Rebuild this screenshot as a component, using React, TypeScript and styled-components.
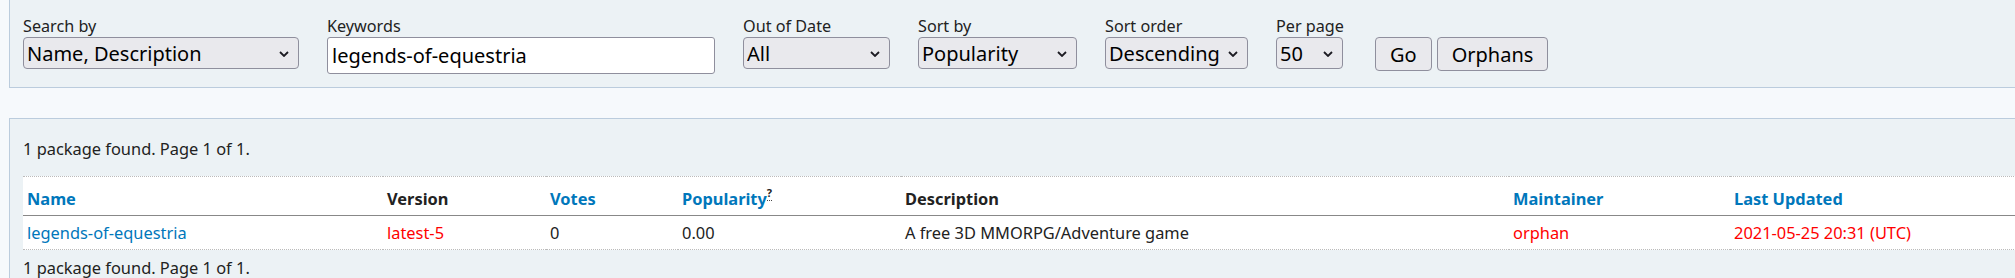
import React from 'react'
import styled, { createGlobalStyle } from 'styled-components'

const GlobalStyle = createGlobalStyle`
  html, body {
    margin: 0;
    padding: 0;
    overflow: hidden;
    background: #f6f9fc;
  }
  body {
    font-family: 'Noto Sans', 'Liberation Sans', sans-serif;
    font-size: 16.4px;
    line-height: 22px;
    color: #222;
  }
`

const Page = styled.div`
  width: 2080px;
  padding-left: 9px;
  margin-top: -10px;
  box-sizing: border-box;
`

const Box = styled.div<{ $pad: string }>`
  background: #ecf2f5;
  border: 1px solid #bcd;
  padding: ${(p) => p.$pad};
  margin-bottom: 30px;
`

const FilterRow = styled.form`
  display: flex;
  align-items: flex-start;
  gap: 28px;
`

const Field = styled.div`
  display: flex;
  flex-direction: column;
`

const Label = styled.label`
  font-size: 16.2px;
  line-height: 22px;
  color: #222;
`

const SelectWrap = styled.div<{ $w: number }>`
  position: relative;
  width: ${(p) => p.$w}px;
  height: 32px;
`

const Select = styled.select`
  appearance: none;
  width: 100%;
  height: 32px;
  box-sizing: border-box;
  margin: 0;
  padding: 0 18px 0 3px;
  font-family: 'Noto Sans', 'Liberation Sans', sans-serif;
  font-size: 20px;
  color: #000;
  background: #e9e9ed;
  border: 1px solid #8f8f9d;
  border-radius: 4px;
`

const Chevron = styled.svg`
  position: absolute;
  right: 10px;
  top: 14px;
  pointer-events: none;
`

const TextInput = styled.input`
  width: 388px;
  height: 37px;
  box-sizing: border-box;
  margin: 0;
  padding: 0 4px;
  font-family: 'Noto Sans', 'Liberation Sans', sans-serif;
  font-size: 20px;
  color: #000;
  background: #fff;
  border: 1px solid #8f8f9d;
  border-radius: 3px;
`

const Buttons = styled.div`
  display: flex;
  gap: 5px;
  padding-top: 22px;
  margin-left: 3px;
`

const Button = styled.button`
  height: 34px;
  box-sizing: border-box;
  margin: 0;
  padding: 0 14px;
  font-family: 'Noto Sans', 'Liberation Sans', sans-serif;
  font-size: 20px;
  color: #000;
  background: #e9e9ed;
  border: 1px solid #8f8f9d;
  border-radius: 4px;
`

const Stats = styled.p<{ $m: string }>`
  margin: ${(p) => p.$m};
  line-height: 22px;
`

const Table = styled.table`
  width: 100%;
  table-layout: fixed;
  border-collapse: collapse;
  background: #fff;
  border-top: 1px dotted #bbb;
`

const Th = styled.th`
  text-align: left;
  font-weight: bold;
  padding: 11px 4px 5px;
  color: #222;
  border-bottom: 1px solid #888;
  white-space: nowrap;
`

const Td = styled.td<{ $red?: boolean }>`
  padding: 6px 4px 5px;
  color: ${(p) => (p.$red ? '#f00' : '#222')};
  border-bottom: 1px dotted #bbb;
  white-space: nowrap;
`

const Link = styled.a`
  color: #07b;
  text-decoration: none;
`

const Sup = styled.sup`
  font-size: 11px;
  line-height: 0;
  vertical-align: 8px;
`

const Abbr = styled.abbr`
  text-decoration: none;
  border-bottom: 1px dotted #444;
  cursor: help;
`

const Caret = () => (
  <Chevron width='10' height='6' viewBox='0 0 10 6'>
    <polyline points='1,1 5,5 9,1' fill='none' stroke='#1c1b22' strokeWidth='1.8' />
  </Chevron>
)

const SelectField = (props: { label: string; width: number; options: string[] }) => (
  <Field>
    <Label>{props.label}</Label>
    <SelectWrap $w={props.width}>
      <Select defaultValue={props.options[0]}>
        {props.options.map((o) => (
          <option key={o}>{o}</option>
        ))}
      </Select>
      <Caret />
    </SelectWrap>
  </Field>
)

const columns = [360, 163, 132, 223, 608, 221]

const App = () => {
  return (
    <>
      <GlobalStyle />
      <Page>
        <Box $pad='24px 13px 13px'>
          <FilterRow onSubmit={(e) => e.preventDefault()}>
            <SelectField
              label='Search by'
              width={276}
              options={['Name, Description', 'Name Only', 'Package Base', 'Keywords', 'Maintainer']}
            />
            <Field>
              <Label>Keywords</Label>
              <TextInput defaultValue='legends-of-equestria' />
            </Field>
            <SelectField label='Out of Date' width={147} options={['All', 'Flagged', 'Not Flagged']} />
            <SelectField label='Sort by' width={159} options={['Popularity', 'Name', 'Votes']} />
            <SelectField label='Sort order' width={143} options={['Descending', 'Ascending']} />
            <SelectField label='Per page' width={67} options={['50', '100', '250']} />
            <Buttons>
              <Button type='submit'>Go</Button>
              <Button type='button'>Orphans</Button>
            </Buttons>
          </FilterRow>
        </Box>

        <Box $pad='13px'>
          <Stats $m='6px 0 16px'>1 package found. Page 1 of 1.</Stats>
          <Table>
            <colgroup>
              {columns.map((w, i) => (
                <col key={i} style={{ width: w }} />
              ))}
              <col />
            </colgroup>
            <thead>
              <tr>
                <Th>
                  <Link href='#'>Name</Link>
                </Th>
                <Th>Version</Th>
                <Th>
                  <Link href='#'>Votes</Link>
                </Th>
                <Th>
                  <Link href='#'>Popularity</Link>
                  <Sup>
                    <Abbr title='Popularity is calculated as the sum of all votes with each vote being weighted with a factor of 0.98 per day since its creation.'>
                      ?
                    </Abbr>
                  </Sup>
                </Th>
                <Th>Description</Th>
                <Th>
                  <Link href='#'>Maintainer</Link>
                </Th>
                <Th>
                  <Link href='#'>Last Updated</Link>
                </Th>
              </tr>
            </thead>
            <tbody>
              <tr>
                <Td>
                  <Link href='#'>legends-of-equestria</Link>
                </Td>
                <Td $red>latest-5</Td>
                <Td>0</Td>
                <Td>0.00</Td>
                <Td>A free 3D MMORPG/Adventure game</Td>
                <Td $red>orphan</Td>
                <Td $red>2021-05-25 20:31 (UTC)</Td>
              </tr>
            </tbody>
          </Table>
          <Stats $m='7px 0 0'>1 package found. Page 1 of 1.</Stats>
        </Box>
      </Page>
    </>
  )
}

export default App
